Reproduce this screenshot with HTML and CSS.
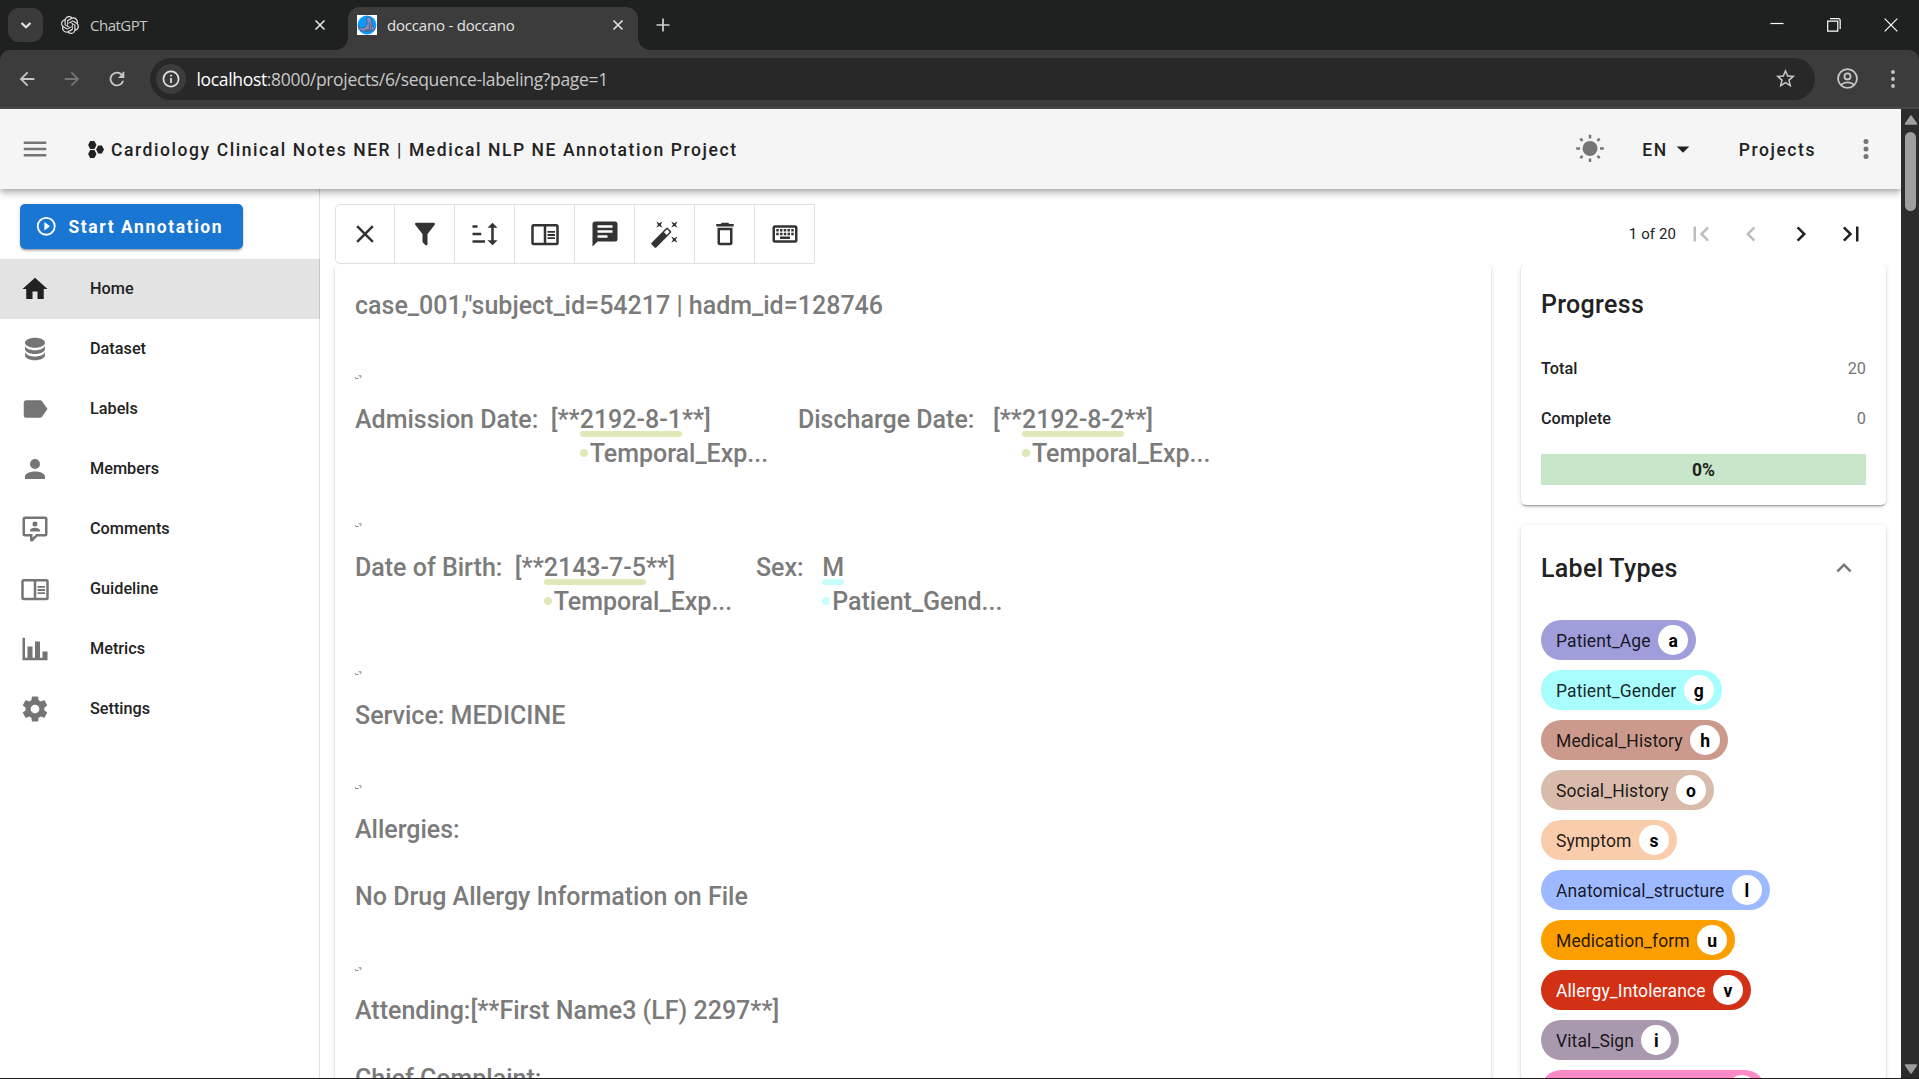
FILE: index.html
```html
<!DOCTYPE html>
<html lang="en">
<head>
<meta charset="utf-8">
<title>doccano - doccano</title>
<link rel="stylesheet" href="styles.css">
</head>
<body>
<div class="chrome">
<div class="tabstrip">
  <div class="tab-search"><svg width="14" height="14" viewBox="0 0 14 14"><path class="ln2" d="M2.500 5L7 9.300 11.500 5"/></svg></div>
  <div class="tab">
    <svg class="fav gpt" viewBox="0 0 24 24"><path d="M22.2819 9.8211a5.9847 5.9847 0 0 0-.5157-4.9108 6.0462 6.0462 0 0 0-6.5098-2.9A6.0651 6.0651 0 0 0 4.9807 4.1818a5.9847 5.9847 0 0 0-3.9977 2.9 6.0462 6.0462 0 0 0 .7427 7.0966 5.98 5.98 0 0 0 .511 4.9107 6.051 6.051 0 0 0 6.5146 2.9001A5.9847 5.9847 0 0 0 13.2599 24a6.0557 6.0557 0 0 0 5.7718-4.2058 5.9894 5.9894 0 0 0 3.9977-2.9001 6.0557 6.0557 0 0 0-.7475-7.0729zm-9.022 12.6081a4.4755 4.4755 0 0 1-2.8764-1.0408l.1419-.0804 4.7783-2.7582a.7948.7948 0 0 0 .3927-.6813v-6.7369l2.02 1.1686a.071.071 0 0 1 .038.052v5.5826a4.504 4.504 0 0 1-4.4945 4.4944zm-9.6607-4.1254a4.4708 4.4708 0 0 1-.5346-3.0137l.142.0852 4.783 2.7582a.7712.7712 0 0 0 .7806 0l5.8428-3.3685v2.3324a.0804.0804 0 0 1-.0332.0615L9.74 19.9502a4.4992 4.4992 0 0 1-6.1408-1.6464zM2.3408 7.8956a4.485 4.485 0 0 1 2.3655-1.9728V11.6a.7664.7664 0 0 0 .3879.6765l5.8144 3.3543-2.0201 1.1685a.0757.0757 0 0 1-.071 0l-4.8303-2.7865A4.504 4.504 0 0 1 2.3408 7.872zm16.5963 3.8558L13.1038 8.364 15.1192 7.2a.0757.0757 0 0 1 .071 0l4.8303 2.7913a4.4944 4.4944 0 0 1-.6765 8.1042v-5.6772a.79.79 0 0 0-.407-.667zm2.0107-3.0231l-.142-.0852-4.7735-2.7818a.7759.7759 0 0 0-.7854 0L9.409 9.2297V6.8974a.0662.0662 0 0 1 .0284-.0615l4.8303-2.7866a4.4992 4.4992 0 0 1 6.6802 4.66zM8.3065 12.863l-2.02-1.1638a.0804.0804 0 0 1-.038-.0567V6.0742a4.4992 4.4992 0 0 1 7.3757-3.4537l-.142.0805L8.704 5.459a.7948.7948 0 0 0-.3927.6813zm1.0976-2.3654l2.602-1.4998 2.6069 1.4998v2.9994l-2.5974 1.4997-2.6067-1.4997Z"/></svg>
    <span class="tab-title">ChatGPT</span>
    <svg class="tab-x" viewBox="0 0 12 12"><path d="M1.500 1.500l9 9M10.500 1.500l-9 9"/></svg>
  </div>
  <div class="tab active">
    <svg class="fav doc" viewBox="0 0 20 20"><rect width="20" height="20" fill="#fff"/><circle cx="10" cy="10" r="9.400" fill="#0d99ff"/><path d="M9.500 3.200c2-1.600 4.300-.8 4.800 1.600l.9 4.700c.9 2 2.400 3.500 2.300 5.500l-6 1.200-6-.2C3 15.500 1.300 13 1.600 10.800c1.200 1.800 2.700 2.700 5.200 2.100 2.500-.8 3.600-3.400 3.200-6.600z" fill="#8593bd" stroke="#3d4f80" stroke-width=".8"/><path d="M12.300 7v7.500M14.300 10v5M8 14.800h5" stroke="#3d4f80" stroke-width=".8" fill="none"/></svg>
    <span class="tab-title">doccano - doccano</span>
    <svg class="tab-x" viewBox="0 0 12 12"><path d="M1.500 1.500l9 9M10.500 1.500l-9 9"/></svg>
  </div>
  <svg class="new-tab" viewBox="0 0 14 14"><path d="M7 .5v13M.5 7h13"/></svg>
  <div class="win">
    <svg width="14" height="14" viewBox="0 0 14 14"><path d="M.5 5.500h13"/></svg>
    <svg width="14" height="14" viewBox="0 0 14 14"><path d="M.7 3.200h10.100v10H.7zM3 .7h8.200a2 2 0 0 1 2 2V11"/></svg>
    <svg width="14" height="14" viewBox="0 0 14 14"><path d="M.7.7l12.600 12.600M13.300.7L.7 13.300"/></svg>
  </div>
</div>
<div class="browserbar">
  <svg class="nav" viewBox="0 0 24 24"><path d="M20 11H7.830l5.590-5.590L12 4l-8 8 8 8 1.410-1.410L7.830 13H20z"/></svg>
  <svg class="nav off" viewBox="0 0 24 24"><path d="M4 11h12.170l-5.590-5.590L12 4l8 8-8 8-1.410-1.410L16.170 13H4z"/></svg>
  <svg class="nav" viewBox="0 0 24 24"><path d="M17.650 6.350A8 8 0 1 0 19.730 14h-2.080A6 6 0 1 1 16.220 7.780L13 11h7V4h-2v2.700z"/></svg>
  <div class="omni">
    <span class="info"><svg width="18" height="18" viewBox="0 0 18 18"><circle cx="9" cy="9" r="7.600"/><path d="M9 8v5M9 4.800v1.700"/></svg></span>
    <span class="url"><b>localhost</b>:8000/projects/6/sequence-labeling?page=1</span>
    <svg class="star" viewBox="0 0 24 24"><path d="M12,15.390L8.240,17.660L9.230,13.380L5.910,10.500L10.290,10.130L12,6.090L13.710,10.130L18.090,10.500L14.770,13.380L15.760,17.660M22,9.240L14.810,8.630L12,2L9.190,8.630L2,9.240L7.450,13.970L5.820,21L12,17.270L18.180,21L16.540,13.970L22,9.240Z"/></svg>
  </div>
  <svg class="user" viewBox="0 0 20 20"><circle cx="10" cy="10" r="9"/><circle cx="10" cy="8" r="2.900"/><path d="M3.800 16c3-3 9.400-3 12.400 0"/></svg>
  <svg class="kebab" viewBox="0 0 4 18"><circle cx="2" cy="2" r="1.900"/><circle cx="2" cy="9" r="1.900"/><circle cx="2" cy="16" r="1.900"/></svg>
</div>
</div>
<div class="view">
  <div class="page">
    <header class="appbar">
      <svg class="ic gray" viewBox="0 0 24 24"><path d="M3,6H21V8H3V6M3,11H21V13H3V11M3,16H21V18H3V16Z"/></svg>
      <svg class="hex" viewBox="0 0 16 17"><path d="M2.200 0h4.200l2.100 4-2.100 4H2.200L.1 4zM2.200 9h4.200l2.100 4-2.100 4H2.200L.1 13zM10.200 4.500h3.700l2.100 4-2.100 4h-3.700l-2.100-4z"/></svg>
      <span class="btxt title">Cardiology Clinical Notes NER | Medical NLP NE Annotation Project</span>
      <svg class="ic gray sun" viewBox="0 0 24 24"><path d="M3.550,18.540L4.960,19.950L6.760,18.160L5.340,16.740M11,22.450C11.320,22.450 13,22.450 13,22.450V19.500H11M12,5.500A6,6 0 0,0 6,11.500A6,6 0 0,0 12,17.500A6,6 0 0,0 18,11.500C18,8.180 15.310,5.500 12,5.500M20,12.500H23V10.500H20M17.240,18.160L19.040,19.950L20.450,18.540L18.660,16.740M20.450,4.460L19.040,3.050L17.240,4.840L18.660,6.260M13,0.550H11V3.500H13M4,10.500H1V12.500H4M6.760,4.840L4.960,3.050L3.550,4.460L5.340,6.260L6.760,4.840Z"/></svg>
      <span class="btxt lang">EN</span>
      <svg class="ic" viewBox="0 0 24 24"><path d="M7,10L12,15L17,10H7Z"/></svg>
      <span class="btxt proj">Projects</span>
      <svg class="ic gray" viewBox="0 0 24 24"><path d="M12,16A2,2 0 0,1 14,18A2,2 0 0,1 12,20A2,2 0 0,1 10,18A2,2 0 0,1 12,16M12,10A2,2 0 0,1 14,12A2,2 0 0,1 12,14A2,2 0 0,1 10,12A2,2 0 0,1 12,10M12,4A2,2 0 0,1 14,6A2,2 0 0,1 12,8A2,2 0 0,1 10,6A2,2 0 0,1 12,4Z"/></svg>
    </header>
    <div class="body">
      <nav class="side">
        <div class="start"><svg viewBox="0 0 24 24"><path d="M12,20C7.590,20 4,16.410 4,12C4,7.590 7.590,4 12,4C16.410,4 20,7.590 20,12C20,16.410 16.410,20 12,20M12,2A10,10 0 0,0 2,12A10,10 0 0,0 12,22A10,10 0 0,0 22,12A10,10 0 0,0 12,2M10,16.500L16,12L10,7.500V16.500Z"/></svg>Start Annotation</div>
        <div class="item on"><svg class="ic" viewBox="0 0 24 24"><path d="M10,20V14H14V20H19V12H22L12,3L2,12H5V20H10Z"/></svg><span>Home</span></div>
        <div class="item"><svg class="ic" viewBox="0 0 24 24"><path d="M12,3C7.580,3 4,4.790 4,7C4,9.210 7.580,11 12,11C16.420,11 20,9.210 20,7C20,4.790 16.420,3 12,3M4,9V12C4,14.210 7.580,16 12,16C16.420,16 20,14.210 20,12V9C20,11.210 16.420,13 12,13C7.580,13 4,11.210 4,9M4,14V17C4,19.210 7.580,21 12,21C16.420,21 20,19.210 20,17V14C20,16.210 16.420,18 12,18C7.580,18 4,16.210 4,14Z"/></svg><span>Dataset</span></div>
        <div class="item"><svg class="ic" viewBox="0 0 24 24"><path d="M17.630,5.840C17.270,5.330 16.670,5 16,5H5A2,2 0 0,0 3,7V17A2,2 0 0,0 5,19H16C16.670,19 17.270,18.660 17.630,18.150L22,12L17.630,5.840Z"/></svg><span>Labels</span></div>
        <div class="item"><svg class="ic" viewBox="0 0 24 24"><path d="M12,4A4,4 0 0,1 16,8A4,4 0 0,1 12,12A4,4 0 0,1 8,8A4,4 0 0,1 12,4M12,14C16.420,14 20,15.790 20,18V20H4V18C4,15.790 7.580,14 12,14Z"/></svg><span>Members</span></div>
        <div class="item"><svg class="ic" viewBox="0 0 24 24"><path d="M9,22A1,1 0 0,1 8,21V18H4A2,2 0 0,1 2,16V4A2,2 0 0,1 4,2H20A2,2 0 0,1 22,4V16A2,2 0 0,1 20,18H13.900L10.200,21.710C10,21.900 9.750,22 9.500,22H9M10,16V19.080L13.080,16H20V4H4V16H10M16,14H8V13C8,11.670 10.670,11 12,11C13.330,11 16,11.670 16,13V14M12,6A2,2 0 0,1 14,8A2,2 0 0,1 12,10A2,2 0 0,1 10,8A2,2 0 0,1 12,6Z"/></svg><span>Comments</span></div>
        <div class="item"><svg class="ic" viewBox="0 0 24 24"><path d="M21,4H3A2,2 0 0,0 1,6V19A2,2 0 0,0 3,21H21A2,2 0 0,0 23,19V6A2,2 0 0,0 21,4M3,19V6H11V19H3M21,19H13V6H21V19M14,9.500H20V11H14V9.500M14,12H20V13.500H14V12M14,14.500H20V16H14V14.500Z"/></svg><span>Guideline</span></div>
        <div class="item"><svg class="ic" viewBox="0 0 24 24"><path d="M22,21H2V3H4V19H6V10H10V19H12V6H16V19H18V14H22V21Z"/></svg><span>Metrics</span></div>
        <div class="item"><svg class="ic" viewBox="0 0 24 24"><path d="M12,15.500A3.500,3.500 0 0,1 8.500,12A3.500,3.500 0 0,1 12,8.500A3.500,3.500 0 0,1 15.500,12A3.500,3.500 0 0,1 12,15.500M19.430,12.970C19.470,12.650 19.500,12.330 19.500,12C19.500,11.670 19.470,11.340 19.430,11L21.540,9.370C21.730,9.220 21.780,8.950 21.660,8.730L19.660,5.270C19.540,5.050 19.270,4.960 19.050,5.050L16.560,6.050C16.040,5.660 15.500,5.320 14.870,5.070L14.500,2.420C14.460,2.180 14.250,2 14,2H10C9.750,2 9.540,2.180 9.500,2.420L9.130,5.070C8.500,5.320 7.960,5.660 7.440,6.050L4.950,5.050C4.730,4.960 4.460,5.050 4.340,5.270L2.340,8.730C2.210,8.950 2.270,9.220 2.460,9.370L4.570,11C4.530,11.340 4.500,11.670 4.500,12C4.500,12.330 4.530,12.650 4.570,12.970L2.460,14.630C2.270,14.780 2.210,15.050 2.340,15.270L4.340,18.730C4.460,18.950 4.730,19.030 4.950,18.950L7.440,17.940C7.960,18.340 8.500,18.680 9.130,18.930L9.500,21.580C9.540,21.820 9.750,22 10,22H14C14.250,22 14.460,21.820 14.500,21.580L14.870,18.930C15.500,18.670 16.040,18.340 16.560,17.940L19.050,18.950C19.270,19.030 19.540,18.950 19.660,18.730L21.660,15.270C21.780,15.050 21.730,14.780 21.540,14.630L19.430,12.970Z"/></svg><span>Settings</span></div>
      </nav>
      <main class="main">
        <div class="tools">
          <div class="group">
            <span><svg class="ic" viewBox="0 0 24 24"><path d="M19,6.410L17.590,5L12,10.590L6.410,5L5,6.410L10.590,12L5,17.590L6.410,19L12,13.410L17.590,19L19,17.590L13.410,12L19,6.410Z"/></svg></span>
            <span><svg class="ic" viewBox="0 0 24 24"><path d="M14,12V19.880C14.040,20.180 13.940,20.500 13.710,20.710C13.320,21.100 12.690,21.100 12.300,20.710L10.290,18.700C10.060,18.470 9.960,18.160 10,17.870V12H9.970L4.210,4.620C3.870,4.190 3.950,3.560 4.380,3.220C4.570,3.080 4.780,3 5,3H19C19.220,3 19.430,3.080 19.620,3.220C20.050,3.560 20.130,4.190 19.790,4.620L14.030,12H14Z"/></svg></span>
            <span><svg class="ic" viewBox="0 0 24 24"><path d="M19,17H22L18,21L14,17H17V7H14L18,3L22,7H19M2,17H12V19H2M6,5V7H2V5M2,11H9V13H2V11Z"/></svg></span>
            <span><svg class="ic" viewBox="0 0 24 24"><path d="M21,4H3A2,2 0 0,0 1,6V19A2,2 0 0,0 3,21H21A2,2 0 0,0 23,19V6A2,2 0 0,0 21,4M3,19V6H11V19H3M21,19H13V6H21V19M14,9.500H20V11H14V9.500M14,12H20V13.500H14V12M14,14.500H20V16H14V14.500Z"/></svg></span>
            <span><svg class="ic" viewBox="0 0 24 24"><path d="M20,2A2,2 0 0,1 22,4V16A2,2 0 0,1 20,18H6L2,22V4C2,2.890 2.900,2 4,2H20M6,7H18V5H6V7M6,11H18V9H6V11M6,14V15H14V13H6Z"/></svg></span>
            <span><svg class="ic" viewBox="0 0 24 24"><path d="M7.500,5.600L5,7L6.400,4.500L5,2L7.500,3.400L10,2L8.600,4.500L10,7L7.500,5.600M19.500,15.400L22,14L20.600,16.500L22,19L19.500,17.600L17,19L18.400,16.500L17,14L19.500,15.400M22,2L20.600,4.500L22,7L19.500,5.600L17,7L18.400,4.500L17,2L19.500,3.400L22,2M13.340,12.780L15.780,10.340L13.660,8.220L11.220,10.660L13.340,12.780M14.370,7.290L16.710,9.630C17.100,10 17.100,10.650 16.710,11.040L5.040,22.710C4.650,23.100 4,23.100 3.630,22.710L1.290,20.370C0.900,20 0.900,19.350 1.290,18.960L12.960,7.290C13.350,6.900 14,6.900 14.370,7.290Z"/></svg></span>
            <span><svg class="ic" viewBox="0 0 24 24"><path d="M6,19A2,2 0 0,0 8,21H16A2,2 0 0,0 18,19V7H6V19M8,9H16V19H8V9M15.500,4L14.500,3H9.500L8.500,4H5V6H19V4H15.500Z"/></svg></span>
            <span><svg class="ic" viewBox="0 0 24 24"><path d="M4,5A2,2 0 0,0 2,7V17A2,2 0 0,0 4,19H20A2,2 0 0,0 22,17V7A2,2 0 0,0 20,5H4M4,7H20V17H4V7M5,8V10H7V8H5M8,8V10H10V8H8M11,8V10H13V8H11M14,8V10H16V8H14M17,8V10H19V8H17M5,11V13H7V11H5M8,11V13H10V11H8M11,11V13H13V11H11M14,11V13H16V11H14M17,11V13H19V11H17M8,14V16H16V14H8Z"/></svg></span>
          </div>
          <div class="pager">
            <span class="count">1 of 20</span>
            <svg class="ic off" viewBox="0 0 24 24"><path d="M18.410,16.590L13.820,12L18.410,7.410L17,6L11,12L17,18L18.410,16.590M6,6H8V18H6V6Z"/></svg>
            <svg class="ic off" viewBox="0 0 24 24"><path d="M15.410,16.580L10.830,12L15.410,7.410L14,6L8,12L14,18L15.410,16.580Z"/></svg>
            <svg class="ic" viewBox="0 0 24 24"><path d="M8.590,16.580L13.170,12L8.590,7.410L10,6L16,12L10,18L8.590,16.580Z"/></svg>
            <svg class="ic" viewBox="0 0 24 24"><path d="M5.590,7.410L10.180,12L5.590,16.590L7,18L13,12L7,6L5.590,7.410M16,6H18V18H16V6Z"/></svg>
          </div>
        </div>
        <div class="cols">
          <section class="card doc-text">
            <p>case_001,"subject_id=54217 | hadm_id=128746</p>
            <p class="ret"><svg viewBox="0 0 7 5"><path d="M.5 2.200V3.500h3.200M3.500.8h2.700v.8L5 3"/></svg></p>
            <p class="ann"><span>Admission Date:</span><span class="g13">[**<u class="temporal">2192-8-1<i>Temporal_Exp...</i></u>**]</span><span class="g88">Discharge Date:</span><span class="g20">[**<u class="temporal">2192-8-2<i>Temporal_Exp...</i></u>**]</span></p>
            <p class="ret"><svg viewBox="0 0 7 5"><path d="M.5 2.200V3.500h3.200M3.500.8h2.700v.8L5 3"/></svg></p>
            <p class="ann"><span>Date of Birth:</span><span class="g13">[**<u class="temporal">2143-7-5<i>Temporal_Exp...</i></u>**]</span><span class="g81">Sex:</span><span class="g20"><u class="gender">M<i>Patient_Gend...</i></u></span></p>
            <p class="ret"><svg viewBox="0 0 7 5"><path d="M.5 2.200V3.500h3.200M3.500.8h2.700v.8L5 3"/></svg></p>
            <p>Service: MEDICINE</p>
            <p class="ret"><svg viewBox="0 0 7 5"><path d="M.5 2.200V3.500h3.200M3.500.8h2.700v.8L5 3"/></svg></p>
            <p>Allergies:</p>
            <p>No Drug Allergy Information on File</p>
            <p class="ret"><svg viewBox="0 0 7 5"><path d="M.5 2.200V3.500h3.200M3.500.8h2.700v.8L5 3"/></svg></p>
            <p>Attending:[**First Name3 (LF) 2297**]</p>
            <p>Chief Complaint:</p>
          </section>
          <aside class="right">
            <section class="card progress">
              <h2>Progress</h2>
              <div class="stat"><span>Total</span><em>20</em></div>
              <div class="stat"><span>Complete</span><em>0</em></div>
              <div class="bar">0%</div>
            </section>
            <section class="card types">
              <div class="types-head"><h2>Label Types</h2><svg class="ic gray" viewBox="0 0 24 24"><path d="M7.410,15.410L12,10.830L16.590,15.410L18,14L12,8L6,14L7.410,15.410Z"/></svg></div>
              <div class="chip c1">Patient_Age<b>a</b></div>
              <div class="chip c2">Patient_Gender<b>g</b></div>
              <div class="chip c3">Medical_History<b>h</b></div>
              <div class="chip c4">Social_History<b>o</b></div>
              <div class="chip c5">Symptom<b>s</b></div>
              <div class="chip c6">Anatomical_structure<b>l</b></div>
              <div class="chip c7">Medication_form<b>u</b></div>
              <div class="chip c8">Allergy_Intolerance<b>v</b></div>
              <div class="chip c9">Vital_Sign<b>i</b></div>
              <div class="chip c10"><b></b></div>
            </section>
          </aside>
        </div>
      </main>
    </div>
  </div>
  <div class="scroll">
    <svg width="14" height="10" viewBox="0 0 14 10"><path d="M7 1l5.500 8h-11z"/></svg>
    <div class="thumb"></div>
    <svg class="down" width="14" height="10" viewBox="0 0 14 10"><path d="M7 9L1.500 1h11z"/></svg>
  </div>
</div>
</body>
</html>
```
FILE: styles.css
```css
* { box-sizing: border-box; }
body {
  margin: 0;
  width: 1919px;
  height: 1079px;
  overflow: hidden;
  display: flex;
  flex-direction: column;
  background: #fff;
  font-family: Roboto, sans-serif;
  color: #222;
}
svg { display: block; flex: none; }
p, h2 { margin: 0; }

/* browser tabs */
.chrome { background: #1f2120; flex: none; }
.tabstrip {
  height: 50px;
  display: flex;
  align-items: center;
  padding-left: 8px;
  font-family: "Open Sans", sans-serif;
}
.tab-search {
  width: 35px;
  height: 34px;
  border-radius: 11px;
  background: #3b3b3b;
  display: flex;
  align-items: center;
  justify-content: center;
}
.ln2 { fill: none; stroke: #e3e3e3; stroke-width: 2.2; }
.tab {
  width: 305px;
  height: 43px;
  margin-top: 7px;
  padding: 0 22px 7px 18px;
  display: flex;
  align-items: center;
  color: #c7c7c7;
}
.tab.active {
  position: relative;
  width: 290px;
  padding: 0 14px 7px 9px;
  background: #3c3c3c;
  border-radius: 12px 12px 0 0;
  color: #e3e3e3;
}
.tab.active::before, .tab.active::after {
  content: "";
  position: absolute;
  bottom: 0;
  width: 12px;
  height: 12px;
}
.tab.active::before { left: -12px; background: radial-gradient(circle at 0 0, transparent 11.5px, #3c3c3c 12px); }
.tab.active::after { right: -12px; background: radial-gradient(circle at 100% 0, transparent 11.5px, #3c3c3c 12px); }
.fav.gpt { width: 18px; height: 18px; fill: #e3e3e3; margin-right: 11px; }
.fav.doc { width: 20px; height: 20px; margin-right: 10px; }
.tab-title { flex: 1; font-size: 15px; letter-spacing: -.5px; white-space: nowrap; }
.active .tab-title { letter-spacing: -.2px; }
.tab-x { width: 12px; height: 12px; fill: none; stroke: #e3e3e3; stroke-width: 1.6; }
.new-tab { width: 14px; height: 14px; margin-left: 18px; fill: none; stroke: #d0d0d0; stroke-width: 1.7; }
.win { margin-left: auto; padding-right: 21px; display: flex; gap: 43px; }
.win svg { fill: none; stroke: #fff; stroke-width: 1.2; }

/* address bar */
.browserbar {
  height: 59px;
  background: #3c3c3c;
  border-bottom: 2px solid #474747;
  border-radius: 10px 10px 0 0;
  display: flex;
  align-items: center;
  padding-left: 16px;
}
.nav { width: 22px; height: 22px; margin-right: 23px; fill: #c7c7c7; }
.nav.off { fill: #757575; }
.omni {
  width: 1665px;
  height: 42px;
  margin-left: -1px;
  border-radius: 21px;
  background: #282828;
  display: flex;
  align-items: center;
  padding: 0 18px 0 6px;
}
.info {
  width: 30px;
  height: 30px;
  border-radius: 50%;
  background: #3c3c3c;
  display: flex;
  align-items: center;
  justify-content: center;
}
.info svg { fill: none; stroke: #e3e3e3; stroke-width: 1.7; }
.url {
  flex: 1;
  margin-left: 10.5px;
  font: 17.5px "Open Sans", sans-serif;
  letter-spacing: -.33px;
  color: #c7c7c7;
}
.url b { font-weight: 400; color: #fff; }
.star { width: 23px; height: 23px; fill: #c7c7c7; }
.user { width: 21px; height: 21px; margin-left: 22px; fill: none; stroke: #c7c7c7; stroke-width: 1.7; }
.kebab { width: 4px; height: 18px; margin-left: 33px; fill: #c7c7c7; }

.view { height: 970px; display: flex; border-bottom: 1px solid #1c1c1c; overflow: hidden; }
.page { width: 1901px; overflow: hidden; }
.ic { width: 30px; height: 30px; fill: #212121; }
.gray { fill: #757575; }

/* application header */
.appbar {
  position: relative;
  z-index: 2;
  height: 80px;
  background: #f5f5f5;
  display: flex;
  align-items: center;
  padding: 0 20px;
  box-shadow: 0 2px 5px -1px rgba(0,0,0,.2), 0 5px 6px rgba(0,0,0,.14), 0 1px 12px rgba(0,0,0,.12);
}
.btxt { padding-top: 2px; font-size: 17.5px; font-weight: 500; letter-spacing: 1.5625px; white-space: nowrap; }
.hex { width: 16px; height: 17px; margin-left: 37.5px; fill: #222; }
.title { margin-left: 7.5px; letter-spacing: 1.575px; }
.sun { margin-left: auto; }
.lang { margin-left: 37px; }
.proj { margin-left: 41px; }
.proj + .ic { margin-left: 35px; }

.body { display: flex; height: 890px; }

/* navigation */
.side { width: 320px; border-right: 1px solid #e0e0e0; padding-top: 15px; flex: none; }
.start {
  width: 223px;
  height: 45px;
  margin: 0 0 10px 20px;
  padding-left: 15px;
  border-radius: 5px;
  background: #1976d2;
  color: #fff;
  display: flex;
  align-items: center;
  font-size: 17.5px;
  font-weight: 700;
  letter-spacing: 1.5625px;
  white-space: nowrap;
  box-shadow: 0 3px 1px -2px rgba(0,0,0,.2), 0 2px 2px rgba(0,0,0,.14), 0 1px 5px rgba(0,0,0,.12);
}
.start svg { width: 22.5px; height: 22.5px; margin-right: 11px; fill: #fff; }
.item {
  height: 60px;
  display: flex;
  align-items: center;
  gap: 40px;
  padding-left: 20px;
  font-size: 16.25px;
  font-weight: 500;
}
.item span { padding-bottom: 2px; }
.item .ic { fill: #757575; }
.item.on { background: #e3e3e3; margin-right: -1px; border-right: 1px solid #c8c8c8; }
.item.on .ic { fill: #212121; }

/* workspace */
.main { flex: 1; padding: 15px 15px 0; min-width: 0; }
.tools { height: 60px; display: flex; }
.group { display: flex; border: 1px solid #e0e0e0; border-radius: 5px 0 0 5px; width: 480px; }
.group span {
  width: 60px;
  display: flex;
  align-items: center;
  justify-content: center;
  border-right: 1px solid #e0e0e0;
}
.group span:first-child { width: 59px; }
.group span:last-child { border-right: 0; width: 59px; }
.group .ic { fill: #333; }
.pager { margin-left: auto; display: flex; align-items: center; gap: 20px; padding-right: 20px; }
.count { font-size: 15px; letter-spacing: .1px; margin-right: -10px; }
.pager .off { fill: #bdbdbd; }

.cols { display: flex; gap: 30px; height: 815px; clip-path: inset(0 -15px); }
.card {
  border-radius: 5px;
  background: #fff;
  box-shadow: 0 3px 1px -2px rgba(0,0,0,.2), 0 2px 2px rgba(0,0,0,.14), 0 1px 5px rgba(0,0,0,.12);
}
.doc-text {
  width: 1156px;
  height: 840px;
  padding: 21px 20px 20px;
  font-size: 25px;
  font-weight: 500;
  color: #7b7b7b;
}
.doc-text p { height: 67.3px; line-height: 42px; display: flex; white-space: pre; }
.doc-text .ann { height: 101.3px; }
.doc-text .ret { height: 46.7px; padding-top: 23px; }
.ret svg { width: 7px; height: 5px; fill: none; stroke: #808080; stroke-width: .9; }
.g13 { margin-left: 12.4px; }
.g20 { margin-left: 18.6px; }
.g81 { margin-left: 81px; }
.g88 { margin-left: 87px; }
.doc-text u { position: relative; display: inline-block; text-decoration: none; }
.doc-text u::before {
  content: "";
  position: absolute;
  left: 0;
  right: 0;
  top: 32px;
  height: 6px;
  border-radius: 3px;
  background: var(--mark);
}
.doc-text u::after {
  content: "";
  position: absolute;
  left: 0;
  top: 50px;
  width: 8px;
  height: 8px;
  border-radius: 50%;
  background: var(--mark);
}
.doc-text i { position: absolute; left: 10px; top: 34px; font-style: normal; }
.temporal { --mark: #dfe8b8; }
.gender { --mark: #c8fdfd; }

.right { width: 365px; }
h2 { font-size: 25px; font-weight: 500; letter-spacing: .3125px; line-height: 40px; }
.progress { height: 241px; padding: 21px 20px 20px; margin-bottom: 20px; }
.progress h2 { margin-bottom: 18px; }
.stat {
  height: 50px;
  display: flex;
  justify-content: space-between;
  align-items: center;
  font-size: 16.25px;
  font-weight: 500;
}
.stat em { font-style: normal; font-weight: 400; color: #757575; }
.bar {
  height: 31px;
  margin-top: 11px;
  background: #c8e6c9;
  text-align: center;
  line-height: 32px;
  font-size: 17.5px;
  font-weight: 700;
}
.types { height: 600px; padding: 20px; }
.types-head { height: 75px; display: flex; justify-content: space-between; padding: 4px 7px 0 0; }
.types-head .ic { margin-top: 4px; }
.chip {
  width: fit-content;
  height: 40px;
  margin-bottom: 10px;
  padding: 1px 8px 0 15px;
  border-radius: 20px;
  display: flex;
  align-items: center;
  font-size: 17.5px;
  letter-spacing: .1px;
  color: rgba(0,0,0,.87);
}
.chip b {
  width: 30px;
  height: 30px;
  margin: -1px 0 0 7.5px;
  padding-top: 1px;
  border-radius: 50%;
  background: #fff;
  color: #000;
  display: flex;
  align-items: center;
  justify-content: center;
}
.c1 { background: #9f9edb; }
.c2 { background: #a8fdfd; }
.c3 { background: #cc9a8c; }
.c4 { background: #d8bbaa; }
.c5 { background: #f9ccab; }
.c6 { background: #9db9ff; }
.c7 { background: #fb9f00; }
.c8 { background: #d33115; color: #fff; }
.c9 { background: #a999ae; }
.c10 { background: #fd8bc8; width: 224px; justify-content: flex-end; }

/* scrollbar */
.scroll {
  width: 18px;
  background: #2c2c2c;
  display: flex;
  flex-direction: column;
  align-items: center;
  padding: 6px 0 4px 1px;
}
.scroll path { fill: #9f9f9f; stroke: #9f9f9f; stroke-width: 1.5; stroke-linejoin: round; }
.thumb { width: 11px; height: 79px; margin-top: 7px; border-radius: 6px; background: #9f9f9f; }
.down { margin-top: auto; }
```
